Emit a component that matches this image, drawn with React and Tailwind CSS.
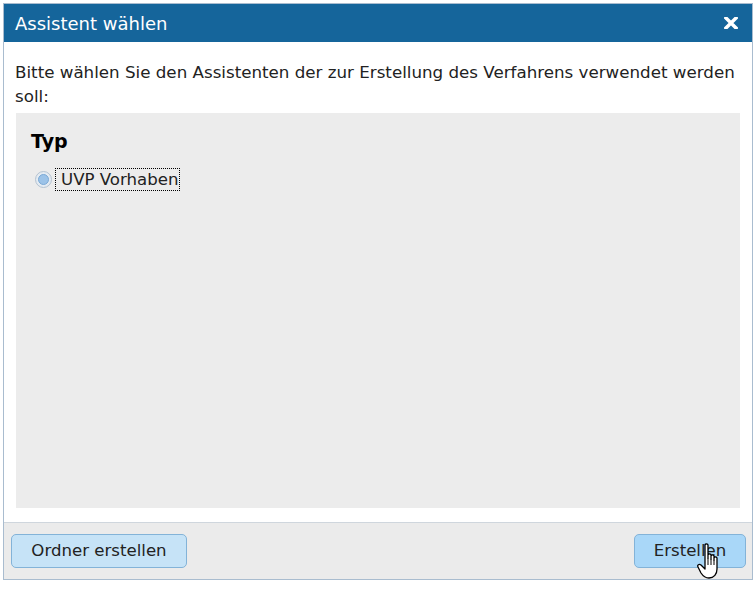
const F = { fontFamily: '"DejaVu Sans", Verdana, sans-serif' };

export default function App() {
  return (
    <div className="w-[756px] h-[591px] bg-white relative overflow-hidden" style={F}>
      <div className="absolute left-[3px] top-[3px] w-[750px] h-[577px] border border-[#a9bccf] bg-white flex flex-col">
        <div className="h-[38px] bg-[#15659b] flex items-center justify-between pl-[11px] pr-[14px] shrink-0">
          <span className="text-white text-[18px] leading-[22px] pt-[2px]">Assistent wählen</span>
          <svg width="14" height="12" viewBox="0 0 14 12">
            <path d="M2 1 L12 11 M12 1 L2 11" stroke="white" strokeWidth="3.5" strokeLinecap="square" />
          </svg>
        </div>
        <div className="flex-1 flex flex-col px-[11px] pt-[18px] pb-[14px]">
          <p className="text-[16.7px] leading-[24px] text-[#222]">
            Bitte wählen Sie den Assistenten der zur Erstellung des Verfahrens verwendet werden soll:
          </p>
          <div className="mt-[5px] mx-[1px] flex-1 bg-[#ececec] pl-[15px] pt-[17px]">
            <div className="text-[19px] leading-[23px] font-bold text-black">Typ</div>
            <div className="mt-[15px] flex items-center">
              <span className="w-[17px] h-[17px] rounded-full border border-[#b5c3d1] bg-[#e4ebf2] flex items-center justify-center ml-[4px]">
                <span className="w-[11px] h-[11px] rounded-full bg-[#9cc3e8] border border-[#7aa9d6]" />
              </span>
              <span className="ml-[3px] border border-dotted border-black pl-[5px] pr-[1px] text-[16.6px] leading-[21px] text-[#222]">UVP Vorhaben</span>
            </div>
          </div>
        </div>
        <div className="h-[57px] border-t border-[#cfd6dd] bg-[#ebebeb] flex items-center justify-between pl-[7px] pr-[6px] shrink-0">
          <button className="h-[34px] w-[176px] rounded-[5px] border border-[#83b3d8] bg-[#c6e3f7] text-[16.6px] text-[#222]" style={F}>Ordner erstellen</button>
          <button className="h-[34px] w-[112px] rounded-[5px] border border-[#83b3d8] bg-[#a9d7f8] text-[16.6px] text-[#222]" style={F}>Erstellen</button>
        </div>
      </div>
      <svg className="absolute left-[697px] top-[543px]" width="28" height="38" viewBox="0 0 28 38">
        <path d="M8 2 C8 0.5 11 0.5 11 2 L11 15 L11 12 C11 10.5 14 10.5 14 12 L14 16 L14 13 C14 11.5 17 11.5 17 13 L17 17 L17 15 C17 13.5 20 13.5 20 15 L20 26 C20 31 17 35 12 35 C8 35 6 33 4 30 L1 24 C0 22 2 20.5 4 22 L8 26 Z" fill="white" stroke="black" strokeWidth="1.3" strokeLinejoin="round" />
        <path d="M11 15 L11 22 M14 16 L14 22 M17 17 L17 22" stroke="black" strokeWidth="1" />
      </svg>
    </div>
  );
}
